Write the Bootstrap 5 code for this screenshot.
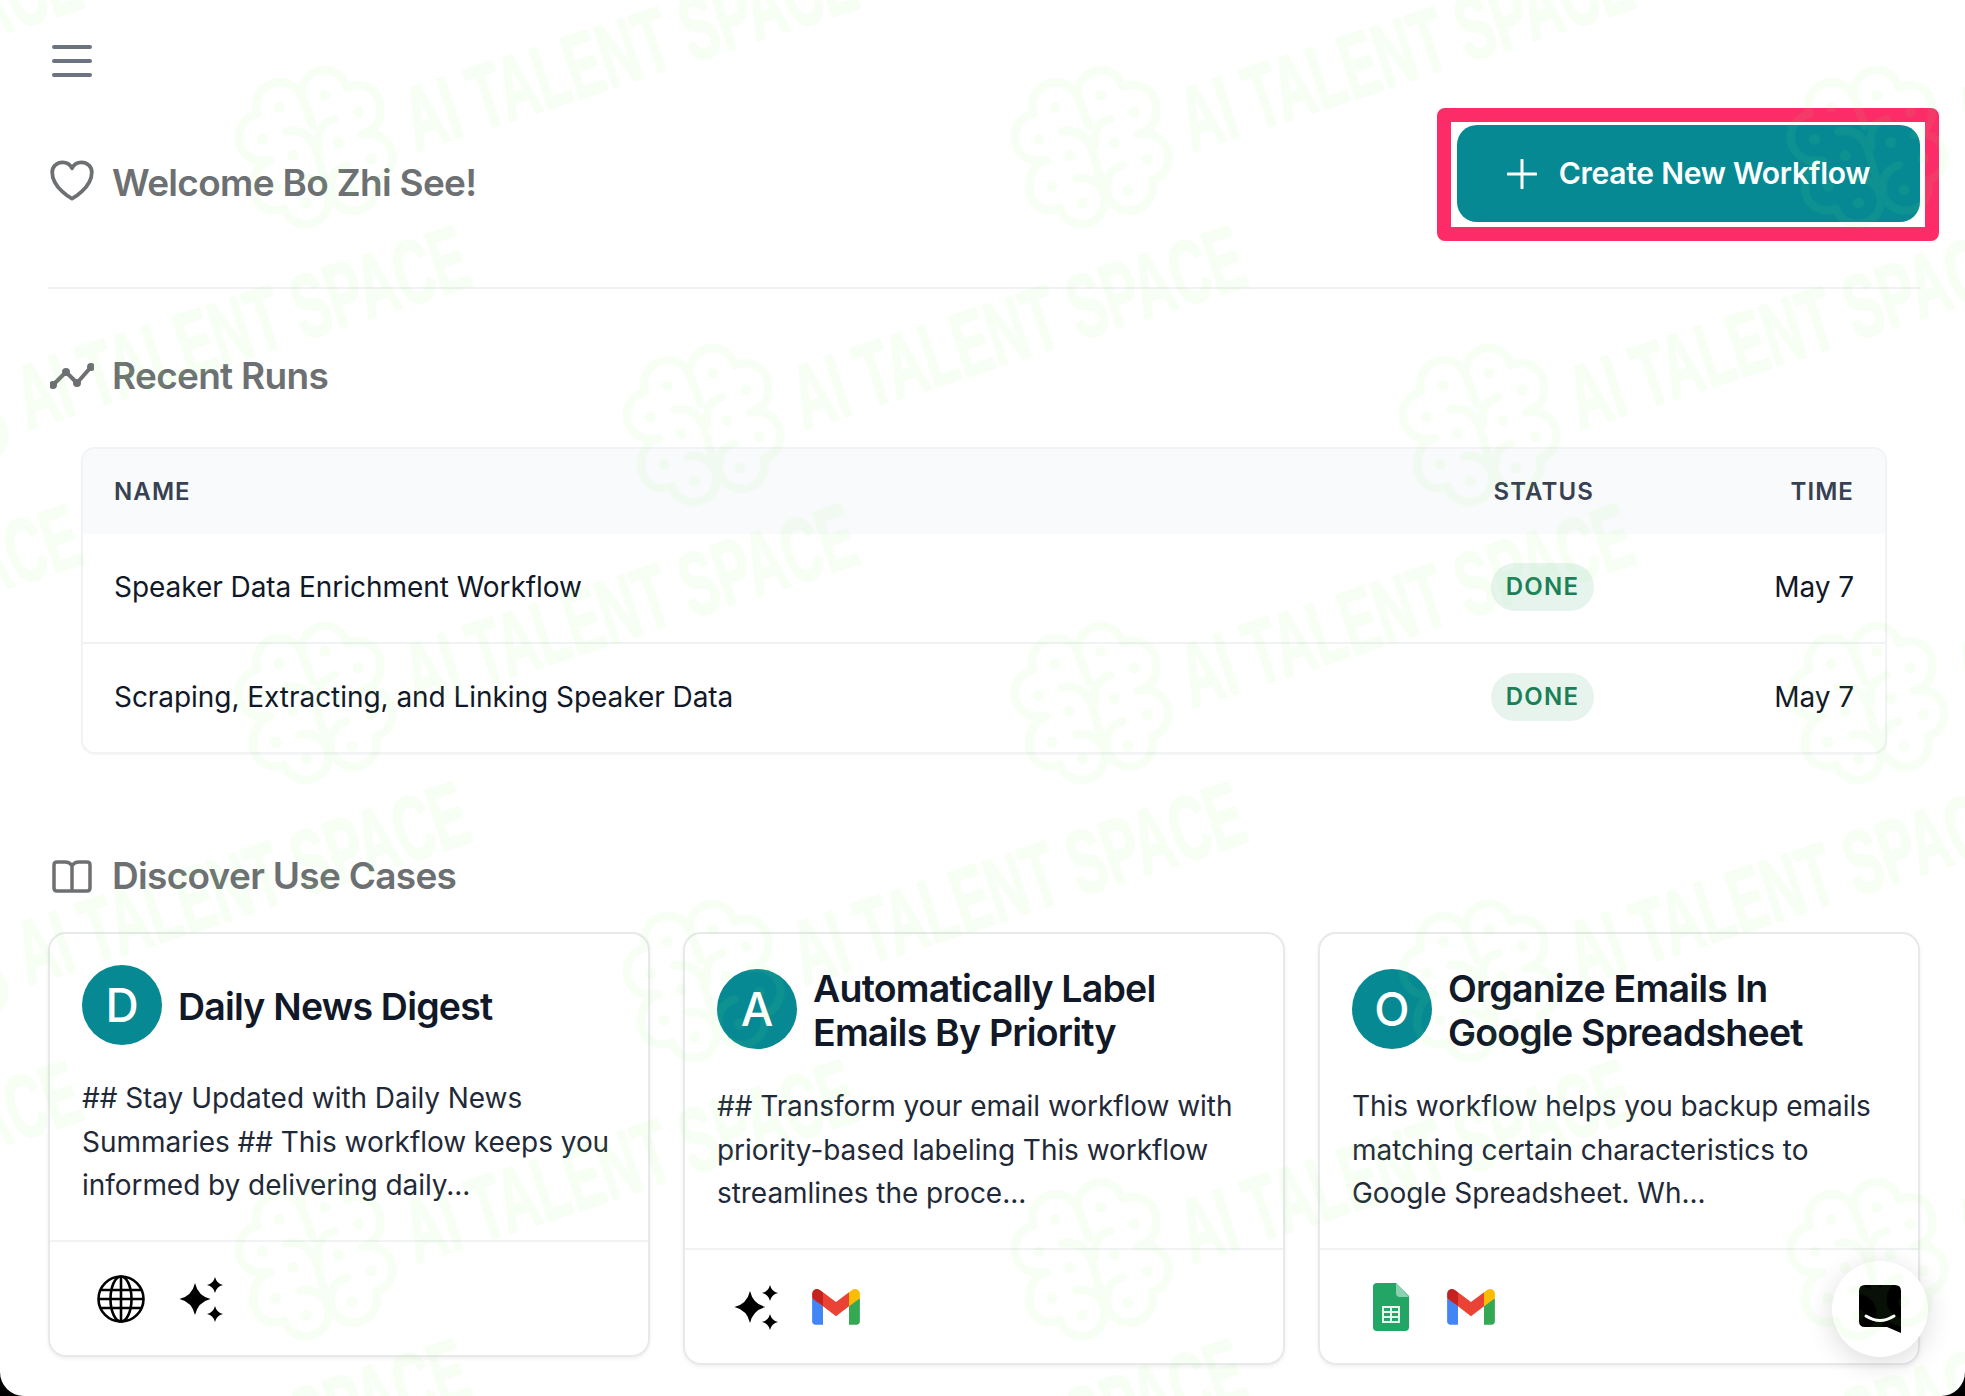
<!DOCTYPE html>
<html lang="en">
<head>
    <meta charset="UTF-8">
    <meta name="viewport" content="width=device-width, initial-scale=1.0">
    <title>Workflows</title>
    <link href="https://cdn.jsdelivr.net/npm/bootstrap@5.3.0/dist/css/bootstrap.min.css" rel="stylesheet">
    <style>
        html, body {
            background: #000;
            overflow: hidden;
        }
        body {
            font-family: "Inter", "Liberation Sans", sans-serif;
            color: #111827;
        }
        .page-shell {
            position: relative;
            height: 1396px;
            overflow: hidden;
            background: #fff;
            border-radius: 0 0 24px 24px;
            padding: 45px 45px 0 48px;
        }
        .watermark-layer {
            position: absolute;
            inset: 0;
            width: 100%;
            height: 100%;
            z-index: 5;
            pointer-events: none;
        }
        .menu-icon {
            display: block;
            margin-left: 4px;
        }
        .hero-row {
            margin-top: 48px;
            padding-bottom: 65px;
            border-bottom: 2px solid #f1f2f3;
        }
        .section-title {
            font-size: 37px;
            line-height: 44px;
            font-weight: 600;
            letter-spacing: -0.7px;
            color: #6d7072;
            margin: 0;
        }
        .title-icon {
            width: 44px;
            margin: 0 18px 0 2px;
            flex: none;
            display: flex;
            justify-content: center;
        }
        .title-icon svg {
            flex: none;
        }
        .hero-title {
            padding-top: 31px;
        }
        .hero-title .section-title {
            margin-top: 5px;
        }
        .create-btn {
            position: relative;
            height: 97px;
            width: 463px;
            border-radius: 20px;
            border: 0;
            background: #078994;
            color: #fff;
            font-size: 30px;
            font-weight: 600;
            letter-spacing: -0.25px;
            gap: 22px;
        }
        .create-btn:hover {
            background: #078994;
            color: #fff;
        }
        .annotation-frame {
            position: absolute;
            left: -20px;
            right: -19px;
            top: -17px;
            bottom: -19px;
            border: 14px solid #fb2c68;
            border-radius: 8px;
            pointer-events: none;
        }
        .runs-heading {
            margin-top: 65px;
        }
        .runs-box {
            margin: 49px 33px 0;
            border: 2px solid #f2f3f5;
            border-radius: 14px;
            overflow: hidden;
            background: #fff;
            box-shadow: 0 1px 2px rgba(0, 0, 0, 0.04);
        }
        .runs-table {
            table-layout: fixed;
            margin: 0;
            --bs-table-color: #111827;
        }
        .runs-table th {
            height: 85px;
            background: #f9fafb;
            font-size: 24px;
            font-weight: 600;
            letter-spacing: 1.1px;
            color: #374151;
            vertical-align: middle;
            border-bottom: 0;
            padding: 0 32px 0 31px;
        }
        .runs-table td {
            height: 109px;
            font-size: 28px;
            letter-spacing: -0.05px;
            vertical-align: middle;
            padding: 0 32px 2px 31px;
            border-bottom: 2px solid #f1f2f4;
        }
        .runs-table tr:last-child td {
            border-bottom: 0;
        }
        .runs-table .cell-status {
            width: 220px;
            padding-right: 0;
            text-align: right;
        }
        .runs-table .cell-time {
            width: 291px;
            padding-right: 31px;
            text-align: right;
        }
        .done-pill {
            display: inline-block;
            height: 48px;
            line-height: 48px;
            width: 103px;
            text-align: center;
            border-radius: 24px;
            background: #e7f4ee;
            color: #1a7f56;
            font-size: 24px;
            font-weight: 600;
            letter-spacing: 1.2px;
        }
        .discover-heading {
            margin-top: 100px;
        }
        .usecase-grid {
            display: grid;
            grid-template-columns: repeat(3, 1fr);
            gap: 33px;
            align-items: start;
            margin-top: 34px;
        }
        .usecase-card {
            border: 2px solid #e8e9eb;
            border-radius: 18px;
            box-shadow: 0 2px 4px rgba(0, 0, 0, 0.06);
            background: #fff;
            --bs-card-cap-bg: transparent;
        }
        .usecase-card .card-body {
            padding: 31px 31px 32px 32px;
        }
        .usecase-avatar {
            width: 80px;
            height: 80px;
            flex: none;
            border-radius: 50%;
            background: #078994;
            color: #fff;
            font-size: 46px;
            font-weight: 500;
        }
        .usecase-title {
            font-size: 37.5px;
            line-height: 44px;
            font-weight: 600;
            letter-spacing: -0.8px;
            color: #111827;
            margin: 1.5px 0 -1.5px;
        }
        .usecase-text {
            font-size: 28px;
            line-height: 43.5px;
            letter-spacing: -0.05px;
            color: #1f2937;
            margin: 32px 0 0;
        }
        .usecase-card .card-footer {
            padding: 33px 31px 32px;
            border-top: 2px solid #f1f2f4;
        }
        .tool-slot {
            width: 80px;
            height: 48px;
        }
        .chat-launcher {
            position: absolute;
            left: 1832px;
            top: 1261px;
            width: 96px;
            height: 96px;
            border-radius: 50%;
            background: #fff;
            box-shadow: 0 6px 28px rgba(0, 0, 0, 0.14);
            z-index: 2;
        }
    </style>
</head>
<body>
    <div class="page-shell">
        <!-- Hamburger -->
        <svg class="menu-icon" width="40" height="32" viewBox="0 0 40 32" fill="none" stroke="#6b7280" stroke-width="4" stroke-linecap="round">
            <path d="M2 2H38M2 16H38M2 30H38"/>
        </svg>

        <!-- Welcome row -->
        <div class="hero-row d-flex justify-content-between align-items-start">
            <div class="hero-title d-flex align-items-center">
                <span class="title-icon">
                    <svg width="44" height="42" viewBox="2 2.75 20 19" fill="none" stroke="#6d7072" stroke-width="1.7" stroke-linecap="round" stroke-linejoin="round">
                        <path d="M21 8.25c0-2.485-2.099-4.5-4.688-4.5-1.935 0-3.597 1.126-4.312 2.733-.715-1.607-2.377-2.733-4.313-2.733C5.1 3.75 3 5.765 3 8.25c0 7.22 9 12 9 12s9-4.78 9-12z"/>
                    </svg>
                </span>
                <h1 class="section-title">Welcome Bo Zhi See!</h1>
            </div>
            <button type="button" class="btn create-btn d-flex align-items-center justify-content-center">
                <svg width="30" height="30" viewBox="0 0 30 30" fill="none" stroke="#fff" stroke-width="3" stroke-linecap="round">
                    <path d="M15 1V29M1 15H29"/>
                </svg>
                Create New Workflow
                <span class="annotation-frame"></span>
            </button>
        </div>

        <!-- Recent runs -->
        <div class="runs-heading d-flex align-items-center">
            <span class="title-icon">
                <svg width="44" height="26" viewBox="0 0 44 26" fill="#6d7072" stroke="#6d7072" stroke-width="4" stroke-linecap="round" stroke-linejoin="round">
                    <path d="M3 22L16 9L27 20L41 4" fill="none"/>
                    <circle cx="3" cy="22" r="2"/>
                    <circle cx="16" cy="9" r="2"/>
                    <circle cx="27" cy="20" r="2"/>
                    <circle cx="41" cy="4" r="2"/>
                </svg>
            </span>
            <h2 class="section-title">Recent Runs</h2>
        </div>

        <div class="runs-box">
            <table class="table runs-table">
                <thead>
                    <tr>
                        <th>NAME</th>
                        <th class="cell-status">STATUS</th>
                        <th class="cell-time">TIME</th>
                    </tr>
                </thead>
                <tbody>
                    <tr>
                        <td>Speaker Data Enrichment Workflow</td>
                        <td class="cell-status"><span class="done-pill">DONE</span></td>
                        <td class="cell-time">May 7</td>
                    </tr>
                    <tr>
                        <td>Scraping, Extracting, and Linking Speaker Data</td>
                        <td class="cell-status"><span class="done-pill">DONE</span></td>
                        <td class="cell-time">May 7</td>
                    </tr>
                </tbody>
            </table>
        </div>

        <!-- Use cases -->
        <div class="discover-heading d-flex align-items-center">
            <span class="title-icon">
                <svg width="40" height="33" viewBox="0 0 40 33" fill="none" stroke="#6d7072" stroke-width="3.5" stroke-linejoin="round">
                    <path d="M20 6V31M20 6Q18 2 13 2H5Q2 2 2 5V28Q2 31 5 31H35Q38 31 38 28V5Q38 2 35 2H27Q22 2 20 6Z"/>
                </svg>
            </span>
            <h2 class="section-title">Discover Use Cases</h2>
        </div>

        <div class="usecase-grid">
            <div class="card usecase-card">
                <div class="card-body">
                    <div class="d-flex align-items-center gap-3">
                        <div class="usecase-avatar d-flex align-items-center justify-content-center">D</div>
                        <h3 class="usecase-title">Daily News Digest</h3>
                    </div>
                    <p class="usecase-text">## Stay Updated with Daily News Summaries ## This workflow keeps you informed by delivering daily...</p>
                </div>
                <div class="card-footer d-flex">
                    <div class="tool-slot d-flex align-items-center justify-content-center">
                        <svg width="48" height="48" viewBox="0 0 48 48" fill="none" stroke="#000" stroke-width="2.6">
                            <circle cx="24" cy="24" r="22.5"/>
                            <ellipse cx="24" cy="24" rx="10.5" ry="22.5"/>
                            <path d="M24 1.5V46.5M3.5 15H44.5M1.5 24H46.5M3.5 33H44.5"/>
                        </svg>
                    </div>
                    <div class="tool-slot d-flex align-items-center justify-content-center">
                        <svg width="44" height="46" viewBox="0 0 44 46" fill="#000">
                            <path d="M16 7Q19 20 31.500 23Q19 26 16 39Q13 26 0.500 23Q13 20 16 7Z"/>
                            <path d="M36 1Q37.500 7.500 44 9Q37.500 10.500 36 17Q34.500 10.500 28 9Q34.500 7.500 36 1Z"/>
                            <path d="M36 30Q37.500 36.500 44 38Q37.500 39.500 36 46Q34.500 39.500 28 38Q34.500 36.500 36 30Z"/>
                        </svg>
                    </div>
                </div>
            </div>

            <div class="card usecase-card">
                <div class="card-body">
                    <div class="d-flex align-items-center gap-3">
                        <div class="usecase-avatar d-flex align-items-center justify-content-center">A</div>
                        <h3 class="usecase-title">Automatically Label Emails By Priority</h3>
                    </div>
                    <p class="usecase-text">## Transform your email workflow with priority-based labeling This workflow streamlines the proce...</p>
                </div>
                <div class="card-footer d-flex">
                    <div class="tool-slot d-flex align-items-center justify-content-center">
                        <svg width="44" height="46" viewBox="0 0 44 46" fill="#000">
                            <path d="M16 7Q19 20 31.500 23Q19 26 16 39Q13 26 0.500 23Q13 20 16 7Z"/>
                            <path d="M36 1Q37.500 7.500 44 9Q37.500 10.500 36 17Q34.500 10.500 28 9Q34.500 7.500 36 1Z"/>
                            <path d="M36 30Q37.500 36.500 44 38Q37.500 39.500 36 46Q34.500 39.500 28 38Q34.500 36.500 36 30Z"/>
                        </svg>
                    </div>
                    <div class="tool-slot d-flex align-items-center justify-content-center">
                        <svg width="48" height="36" viewBox="0 0 256 193">
                            <path fill="#4285F4" d="M58.182 192.05V93.14L27.507 65.077 0 49.504v125.091c0 9.658 7.825 17.455 17.455 17.455h40.727Z"/>
                            <path fill="#34A853" d="M197.818 192.05h40.727c9.659 0 17.455-7.826 17.455-17.455V49.505l-31.156 17.837-27.026 25.798v98.91Z"/>
                            <path fill="#EA4335" d="m58.182 93.14-4.174-38.647 4.174-36.989L128 69.868l69.818-52.364 4.669 34.992-4.669 40.644L128 145.504z"/>
                            <path fill="#FBBC04" d="M197.818 17.504V93.14L256 49.504V26.231c0-21.585-24.64-33.89-41.89-20.945l-16.292 12.218Z"/>
                            <path fill="#C5221F" d="M0 49.504l26.759 20.07L58.182 93.14V17.504L41.89 5.286C24.61-7.66 0 4.646 0 26.23v23.273Z"/>
                        </svg>
                    </div>
                </div>
            </div>

            <div class="card usecase-card">
                <div class="card-body">
                    <div class="d-flex align-items-center gap-3">
                        <div class="usecase-avatar d-flex align-items-center justify-content-center">O</div>
                        <h3 class="usecase-title">Organize Emails In Google Spreadsheet</h3>
                    </div>
                    <p class="usecase-text">This workflow helps you backup emails matching certain characteristics to Google Spreadsheet. Wh...</p>
                </div>
                <div class="card-footer d-flex">
                    <div class="tool-slot d-flex align-items-center justify-content-center">
                        <svg width="36" height="48" viewBox="0 0 36 48">
                            <path fill="#23a566" d="M4 0H23L36 13V44Q36 48 32 48H4Q0 48 0 44V4Q0 0 4 0Z"/>
                            <path fill="#8ed1b1" d="M23 0L36 14H27Q23 14 23 10Z"/>
                            <path fill="none" stroke="#e6f5ed" stroke-width="2" d="M10 24H26V39H10ZM10 29H26M10 34H26M18 24V39"/>
                        </svg>
                    </div>
                    <div class="tool-slot d-flex align-items-center justify-content-center">
                        <svg width="48" height="36" viewBox="0 0 256 193">
                            <path fill="#4285F4" d="M58.182 192.05V93.14L27.507 65.077 0 49.504v125.091c0 9.658 7.825 17.455 17.455 17.455h40.727Z"/>
                            <path fill="#34A853" d="M197.818 192.05h40.727c9.659 0 17.455-7.826 17.455-17.455V49.505l-31.156 17.837-27.026 25.798v98.91Z"/>
                            <path fill="#EA4335" d="m58.182 93.14-4.174-38.647 4.174-36.989L128 69.868l69.818-52.364 4.669 34.992-4.669 40.644L128 145.504z"/>
                            <path fill="#FBBC04" d="M197.818 17.504V93.14L256 49.504V26.231c0-21.585-24.64-33.89-41.89-20.945l-16.292 12.218Z"/>
                            <path fill="#C5221F" d="M0 49.504l26.759 20.07L58.182 93.14V17.504L41.89 5.286C24.61-7.66 0 4.646 0 26.23v23.273Z"/>
                        </svg>
                    </div>
                </div>
            </div>
        </div>

        <!-- Chat launcher -->
        <div class="chat-launcher d-flex align-items-center justify-content-center">
            <svg width="42" height="48" viewBox="0 0 42 48">
                <path fill="#000" d="M6 0H36Q42 0 42 6V48L28 42H6Q0 42 0 36V6Q0 0 6 0Z"/>
                <path fill="none" stroke="#fff" stroke-width="3" stroke-linecap="round" d="M7 31Q21 40 35 31"/>
            </svg>
        </div>

        <!-- Watermark, tiled over the whole page -->
        <svg class="watermark-layer" id="watermark" xmlns="http://www.w3.org/2000/svg">
            <defs>
                <g id="wm-tile">
                    <g transform="translate(-84 -92) scale(0.35)" fill="none" stroke="#82ff64" stroke-width="24" stroke-linecap="round" stroke-linejoin="round">
                        <path d="M248 200L218 120A65 65 0 0 0 90 165A68 68 0 0 0 90 298L128 298Q80 315 78 370A62 62 0 0 0 165 435A66 66 0 1 0 212 350"/>
                        <path d="M172 215Q235 205 258 270L285 365"/>
                        <path d="M248 200L218 120A65 65 0 0 1 345 90A65 65 0 0 1 440 155Q445 205 388 225A68 68 0 0 1 428 355A65 65 0 0 1 300 395Q290 330 345 312"/>
                        <path d="M310 180Q255 195 266 260"/>
                        <g fill="#82ff64" stroke="none">
                            <circle cx="283" cy="112" r="16"/>
                            <circle cx="378" cy="160" r="16"/>
                            <circle cx="322" cy="247" r="16"/>
                            <circle cx="415" cy="293" r="16"/>
                            <circle cx="360" cy="383" r="16"/>
                            <circle cx="152" cy="147" r="16"/>
                            <circle cx="105" cy="238" r="16"/>
                            <circle cx="192" cy="284" r="16"/>
                            <circle cx="143" cy="372" r="16"/>
                            <circle cx="230" cy="420" r="16"/>
                        </g>
                    </g>
                    <text transform="translate(106 4) rotate(-18)" font-family="Liberation Sans, sans-serif" font-weight="700" font-size="90" fill="#82ff64" stroke="#82ff64" stroke-width="2" textLength="470" lengthAdjust="spacingAndGlyphs">AI TALENT SPACE</text>
                </g>
            </defs>
        </svg>
    </div>

    <script src="https://cdn.jsdelivr.net/npm/bootstrap@5.3.0/dist/js/bootstrap.bundle.min.js"></script>
    <script>
        // Stagger the watermark tile across the page
        const layer = document.getElementById('watermark');
        const wrap = document.createElementNS('http://www.w3.org/2000/svg', 'g');
        wrap.setAttribute('opacity', '0.07');
        for (let row = 0; row < 7; row++) {
            const y = -130 + row * 278;
            const startX = row % 2 === 0 ? -78 : -466;
            for (let x = startX; x < 2300; x += 776) {
                const tile = document.createElementNS('http://www.w3.org/2000/svg', 'use');
                tile.setAttribute('href', '#wm-tile');
                tile.setAttribute('x', x);
                tile.setAttribute('y', y);
                wrap.appendChild(tile);
            }
        }
        layer.appendChild(wrap);
    </script>
</body>
</html>
